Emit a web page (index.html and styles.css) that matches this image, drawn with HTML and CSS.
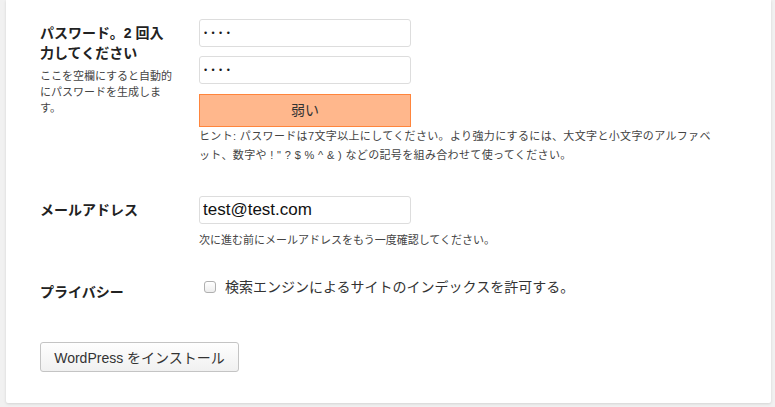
FILE: index.html
```html
<!DOCTYPE html>
<html lang="ja">
<head>
<meta charset="utf-8">
<title>WordPress インストール</title>
<link rel="stylesheet" href="styles.css">
</head>
<body>
<form class="card">
  <div class="row row-pw">
    <div class="label">
      <div class="th">パスワード。2 回入力してください</div>
      <p class="desc">ここを空欄にすると自動的にパスワードを生成します。</p>
    </div>
    <div class="field">
      <input class="text pw pw1" type="password" value="1234">
      <input class="text pw pw2" type="password" value="1234">
      <div class="meter">弱い</div>
      <p class="hint hint-pw">ヒント: パスワードは7文字以上にしてください。より強力にするには、大文字と小文字のアルファベット、数字や ! " ? $ % ^ &amp; ) などの記号を組み合わせて使ってください。</p>
    </div>
  </div>
  <div class="row row-mail">
    <div class="label">
      <div class="th">メールアドレス</div>
    </div>
    <div class="field">
      <input class="text" type="text" value="test@test.com">
      <p class="hint hint-mail">次に進む前にメールアドレスをもう一度確認してください。</p>
    </div>
  </div>
  <div class="row row-privacy">
    <div class="label">
      <div class="th th-privacy">プライバシー</div>
    </div>
    <div class="field">
      <label class="check"><input class="box" type="checkbox"> 検索エンジンによるサイトのインデックスを許可する。</label>
    </div>
  </div>
  <div class="submit">
    <button class="button" type="button">WordPress をインストール</button>
  </div>
</form>
</body>
</html>
```

FILE: styles.css
```css
html, body {
  margin: 0;
  padding: 0;
}
body {
  background: #f1f1f1;
  font-family: "Liberation Sans", "Noto Sans CJK JP", sans-serif;
  color: #444;
  height: 407px;
  overflow: hidden;
}
.card {
  display: block;
  background: #fff;
  margin: 0 4px 4px 6px;
  box-shadow: 0 1px 3px rgba(0, 0, 0, 0.13);
  border-radius: 0 0 2px 2px;
  padding: 19px 0 31px 34px;
}
.row {
  display: flex;
  align-items: flex-start;
}
.row-mail {
  margin-top: 31px;
}
.row-privacy {
  margin-top: 27px;
}
.label {
  flex: none;
  width: 136px;
  margin-right: 23px;
}
.th {
  font-size: 14px;
  font-weight: bold;
  line-height: 20px;
  color: #222;
  padding-top: 4px;
}
.th-privacy {
  padding-top: 5px;
}
.desc {
  margin: 5px 0 0;
  font-size: 11px;
  line-height: 16px;
  color: #444;
}
.field {
  width: 514px;
}
.text {
  display: block;
  box-sizing: border-box;
  width: 212px;
  height: 28px;
  margin: 0;
  padding: 0 3px;
  border: 1px solid #ddd;
  border-radius: 3px;
  background: #fff;
  font-family: "Liberation Sans", "Noto Sans CJK JP", sans-serif;
  font-size: 17px;
  color: #111;
  outline: none;
}
.pw {
  font-size: 9px;
  letter-spacing: 4.4px;
  padding-left: 4px;
  color: #1a1a1a;
}
.pw1 {
  margin-bottom: 9px;
}
.pw2 {
  margin-bottom: 10px;
}
.meter {
  box-sizing: border-box;
  width: 212px;
  height: 33px;
  background: #ffb78c;
  border: 1px solid #ff853c;
  text-align: center;
  font-size: 14px;
  line-height: 31px;
  color: #333;
}
.hint {
  margin: 0;
  font-size: 11px;
  line-height: 19px;
  color: #444;
}
.hint-pw {
  letter-spacing: 0.35px;
}
.hint-mail {
  margin-top: 7px;
}
.check {
  display: flex;
  align-items: center;
  height: 20px;
  font-size: 14px;
  line-height: 20px;
  color: #333;
}
.box {
  appearance: none;
  -webkit-appearance: none;
  box-sizing: border-box;
  width: 12px;
  height: 12px;
  margin: 0 9px 0 5px;
  border: 1px solid #b0b0b0;
  border-radius: 3px;
  background: linear-gradient(#fff, #ededed);
}
.submit {
  margin-top: 40px;
}
.button {
  box-sizing: border-box;
  height: 30px;
  width: 199px;
  padding: 0;
  border: 1px solid #c4c4c4;
  border-radius: 3px;
  background: linear-gradient(#fefefe, #f0f0f0);
  font-family: "Liberation Sans", "Noto Sans CJK JP", sans-serif;
  font-size: 14px;
  color: #333;
}
```
